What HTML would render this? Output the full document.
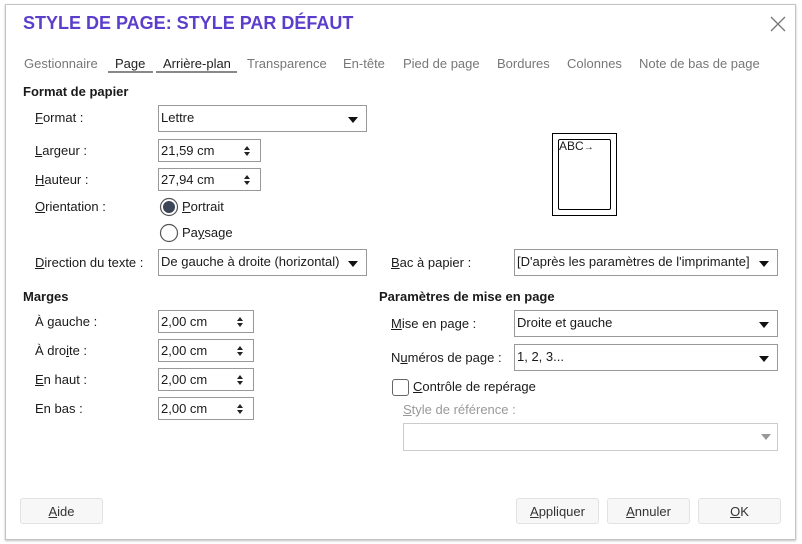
<!DOCTYPE html>
<html><head><meta charset="utf-8"><style>
*{box-sizing:border-box;margin:0;padding:0}
body{width:802px;height:544px;background:#fff;font-family:"Liberation Sans",sans-serif;font-size:13px;color:#1a1a1a;position:relative;overflow:hidden}
.dlg{position:absolute;left:5px;top:4px;width:791px;height:536px;border:1px solid #c4c4c4;background:#fff;box-shadow:0 1px 2px rgba(0,0,0,.25)}
.a{position:absolute;white-space:nowrap}
.t{color:#5b3fcc;font-weight:bold;font-size:18px;left:23px;top:13px}
.tab{top:56px;color:#777}
.tab.on{color:#222}
.ul{position:absolute;top:71px;height:2px;background:#888}
.h{font-weight:bold}
.box{position:absolute;border:1px solid #999;background:#fff;padding:4px 0 0 2px}
.sel::after{content:"";position:absolute;right:8px;top:50%;margin-top:-2px;border:5px solid transparent;border-top:6px solid #111;border-bottom:0}
.spin::after{content:"";position:absolute;right:10px;top:6px;border:3px solid transparent;border-bottom:4px solid #222;border-top:0}
.spin::before{content:"";position:absolute;right:10px;bottom:5px;border:3px solid transparent;border-top:4px solid #222;border-bottom:0}
u{text-decoration:underline}
.btn{position:absolute;top:498px;height:26px;background:#f7f7f7;border:1px solid #e2e2e2;border-radius:3px;text-align:center;line-height:25px;color:#333}
</style></head><body>
<div class="dlg"></div>
<div class="a t">STYLE DE PAGE: STYLE PAR DÉFAUT</div>
<svg class="a" style="left:770px;top:16px" width="16" height="16"><path d="M1 1L15 15M15 1L1 15" stroke="#777" stroke-width="1.3"/></svg>
<div class="a tab" style="left:24px">Gestionnaire</div>
<div class="a tab on" style="left:115px">Page</div>
<div class="a tab on" style="left:163px">Arrière-plan</div>
<div class="a tab" style="left:247px">Transparence</div>
<div class="a tab" style="left:343px">En-tête</div>
<div class="a tab" style="left:403px">Pied de page</div>
<div class="a tab" style="left:497px">Bordures</div>
<div class="a tab" style="left:567px">Colonnes</div>
<div class="a tab" style="left:639px">Note de bas de page</div>
<div class="ul" style="left:108px;width:45px"></div>
<div class="ul" style="left:156px;width:81px"></div>

<div class="a h" style="left:23px;top:84px">Format de papier</div>
<div class="a" style="left:35px;top:110px"><u>F</u>ormat :</div>
<div class="box sel" style="left:158px;top:105px;width:209px;height:27px">Lettre</div>
<div class="a" style="left:35px;top:143px"><u>L</u>argeur :</div>
<div class="box spin" style="left:158px;top:139px;width:103px;height:23px;padding-top:3px">21,59 cm</div>
<div class="a" style="left:35px;top:172px"><u>H</u>auteur :</div>
<div class="box spin" style="left:158px;top:168px;width:103px;height:23px;padding-top:3px">27,94 cm</div>
<div class="a" style="left:35px;top:199px"><u>O</u>rientation :</div>
<svg class="a" style="left:159px;top:197px" width="20" height="20"><circle cx="10" cy="10" r="8.5" fill="#fff" stroke="#555" stroke-width="1.2"/><circle cx="10" cy="10" r="6" fill="#3d4659"/></svg>
<div class="a" style="left:182px;top:199px"><u>P</u>ortrait</div>
<svg class="a" style="left:159px;top:223px" width="20" height="20"><circle cx="10" cy="10" r="8.5" fill="#fff" stroke="#555" stroke-width="1.2"/></svg>
<div class="a" style="left:182px;top:225px">Pa<u>y</u>sage</div>
<div class="a" style="left:35px;top:255px"><u>D</u>irection du texte :</div>
<div class="box sel" style="left:158px;top:249px;width:209px;height:27px">De gauche à droite (horizontal)</div>

<div style="position:absolute;left:552px;top:133px;width:65px;height:83px;border:1.5px solid #000"></div>
<div style="position:absolute;left:558px;top:139px;width:53px;height:71px;border:1px solid #000;border-radius:2px"></div>
<div class="a" style="left:559px;top:139px;font-size:12px">ABC<span style="font-size:10px">→</span></div>

<div class="a" style="left:391px;top:255px"><u>B</u>ac à papier :</div>
<div class="box sel" style="left:514px;top:249px;width:264px;height:27px">[D'après les paramètres de l'imprimante]</div>

<div class="a h" style="left:23px;top:289px">Marges</div>
<div class="a" style="left:35px;top:314px">À <u>g</u>auche :</div>
<div class="box spin" style="left:158px;top:310px;width:96px;height:23px;padding-top:3px">2,00 cm</div>
<div class="a" style="left:35px;top:343px">À dro<u>i</u>te :</div>
<div class="box spin" style="left:158px;top:339px;width:96px;height:23px;padding-top:3px">2,00 cm</div>
<div class="a" style="left:35px;top:372px"><u>E</u>n haut :</div>
<div class="box spin" style="left:158px;top:368px;width:96px;height:23px;padding-top:3px">2,00 cm</div>
<div class="a" style="left:35px;top:401px">En bas :</div>
<div class="box spin" style="left:158px;top:397px;width:96px;height:23px;padding-top:3px">2,00 cm</div>

<div class="a h" style="left:379px;top:289px">Paramètres de mise en page</div>
<div class="a" style="left:391px;top:316px"><u>M</u>ise en page :</div>
<div class="box sel" style="left:514px;top:310px;width:264px;height:27px">Droite et gauche</div>
<div class="a" style="left:391px;top:350px">N<u>u</u>méros de page :</div>
<div class="box sel" style="left:514px;top:344px;width:264px;height:27px">1, 2, 3...</div>
<div style="position:absolute;left:392px;top:379px;width:17px;height:17px;border:1px solid #666;border-radius:3px"></div>
<div class="a" style="left:413px;top:379px"><u>C</u>ontrôle de repérage</div>
<div class="a" style="left:403px;top:402px;color:#999"><u>S</u>tyle de référence :</div>
<div class="box" style="left:403px;top:423px;width:375px;height:28px;border-color:#ccc"></div>
<div class="a" style="left:761px;top:434px;border:5px solid transparent;border-top:6px solid #999;border-bottom:0"></div>

<div class="btn" style="left:20px;width:83px"><u>A</u>ide</div>
<div class="btn" style="left:516px;width:83px"><u>A</u>ppliquer</div>
<div class="btn" style="left:607px;width:83px"><u>A</u>nnuler</div>
<div class="btn" style="left:698px;width:83px"><u>O</u>K</div>
</body></html>
